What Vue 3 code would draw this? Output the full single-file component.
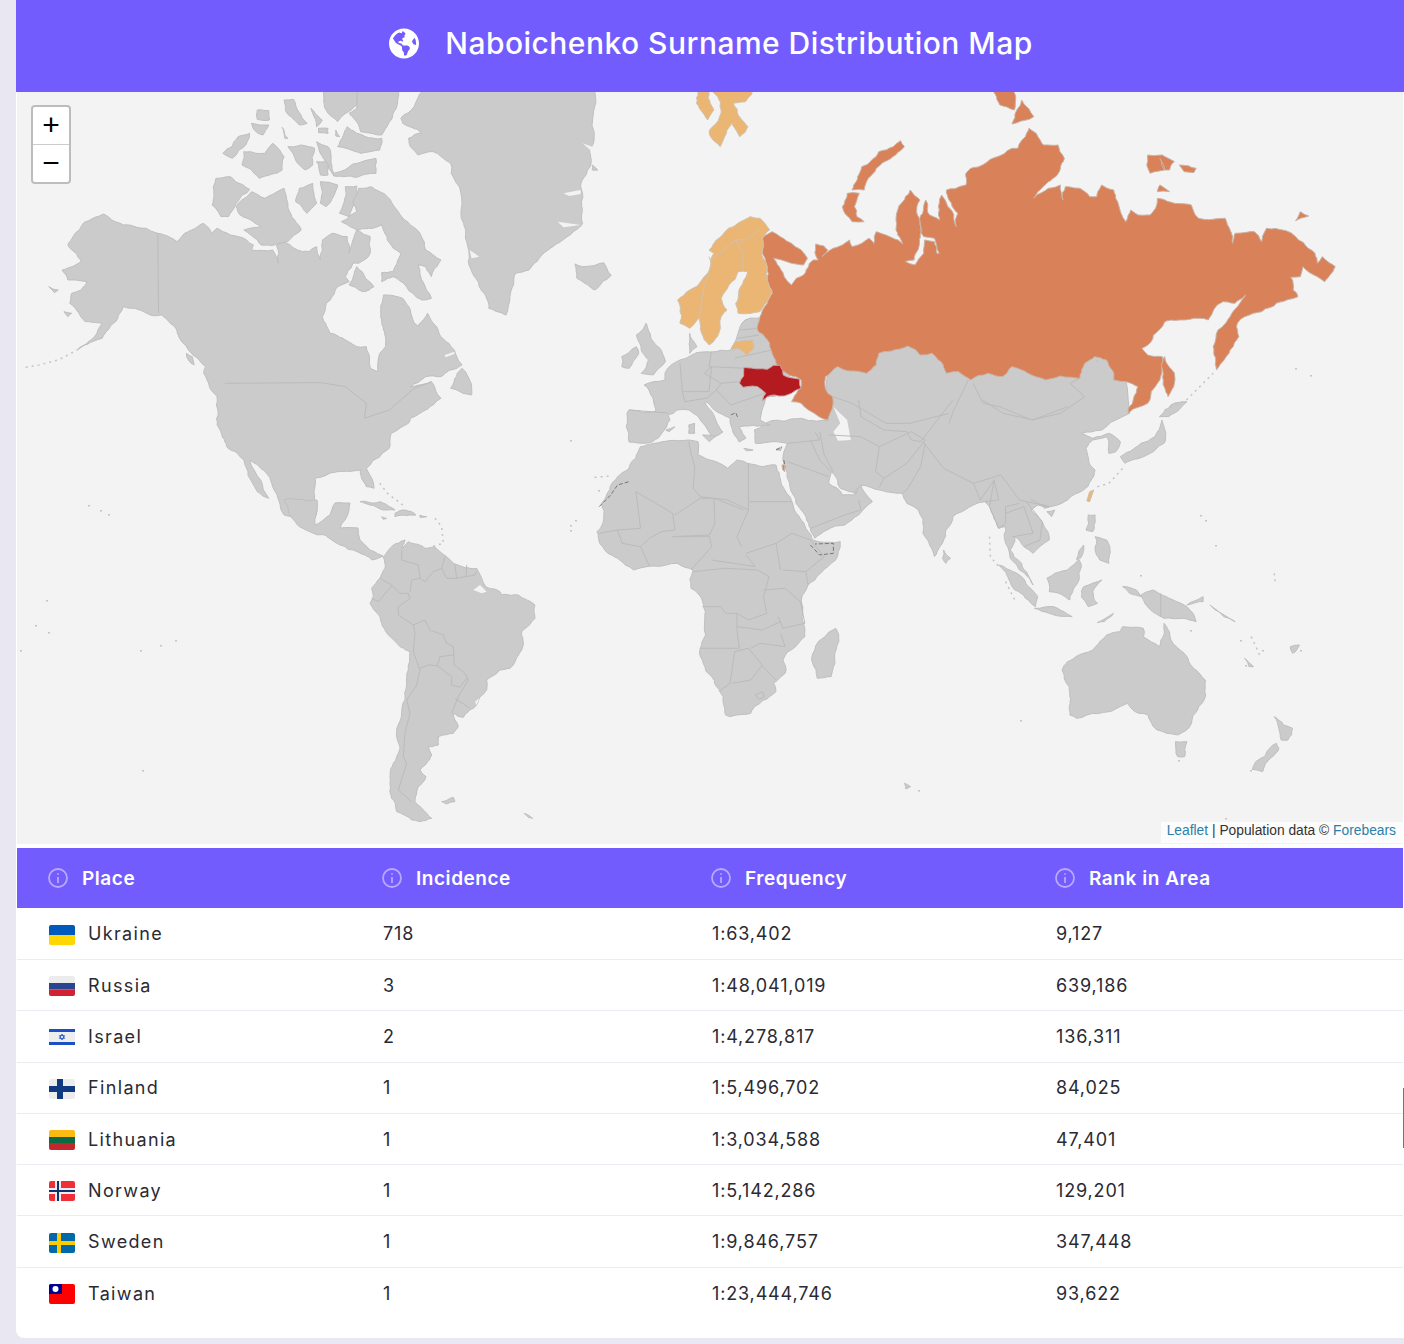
<script setup>
// map shapes are grouped by the box they were measured in
const boxes = {
  north: 'translate(20 90) scale(.3827 .3333)',
  east: 'translate(600 90) scale(.4847 .3333)',
  south: 'translate(590 400) scale(.4592 .3333)',
  america: 'translate(340 500) scale(.3333 .3333)',
  page: ''
}

// coastlines: split long edges and push the midpoints a little so they don't look ruler straight
let seed = 7
function rnd() {
  seed = (seed * 16807) % 2147483647
  return (seed % 2000) / 1000 - 1
}
function rough(points, box) {
  let pts = points.split(' ').map(p => p.split(',').map(Number))
  const unit = box == 'page' ? 0.5 : 1
  for (let pass = 0; pass < 3; pass++) {
    const out = []
    pts.forEach((a, i) => {
      const b = pts[(i + 1) % pts.length]
      out.push(a)
      const len = Math.hypot(b[0] - a[0], b[1] - a[1])
      if (len > 14 * unit) {
        const k = Math.min(len * 0.09, 7 * unit)
        out.push([(a[0] + b[0]) / 2 + rnd() * k, (a[1] + b[1]) / 2 + rnd() * k])
      }
    })
    pts = out
  }
  return pts.map(p => p[0].toFixed(1) + ',' + p[1].toFixed(1)).join(' ')
}

const land = [
  // North America
  { box: 'north', points: '218,372 240,390 270,405 330,415 360,430 410,455 430,430 480,400 500,430 515,415 530,425 570,440 610,465 605,480 660,480 675,520 670,465 690,455 725,480 755,485 775,470 785,510 790,450 815,430 855,440 860,490 880,420 915,440 915,490 885,520 870,520 850,560 860,575 830,590 800,640 790,680 810,730 880,770 905,770 915,835 935,845 940,790 955,770 950,720 945,690 950,615 1000,625 1020,660 1030,700 1040,710 1065,670 1100,740 1135,780 1155,825 1100,860 1060,860 1020,890 1075,875 1100,925 1060,960 1020,985 1015,1000 970,1030 965,1075 925,1110 905,1135 925,1195 905,1190 890,1140 830,1145 770,1165 770,1195 775,1275 690,1275 660,1190 625,1130 600,1110 650,1225 620,1205 585,1110 540,1070 515,1005 515,920 480,850 485,830 440,780 410,720 370,675 340,675 300,655 270,650 250,695 215,745 150,780 195,740 215,700 170,695 130,640 135,610 160,600 175,575 125,570 110,540 160,515 125,465 155,420 165,400' },
  { box: 'page', points: '284,500 317,500 316,515 315,525 330,515 335,503 350,503 345,520 340,528 358,528 360,540 370,550 383,556 372,560 358,552 340,545 325,535 300,527 290,515' },
  // Greenland and the arctic islands
  { box: 'north', points: '1065,-20 1495,-20 1500,150 1490,230 1465,290 1470,400 1430,440 1380,480 1330,540 1295,550 1280,620 1270,675 1225,655 1200,590 1175,530 1170,470 1165,420 1155,340 1125,220 1080,185 1040,195 1020,170 1015,145 1050,130 1000,100 995,85 1030,50' },
  { box: 'north', points: '1450,522 1470,530 1525,518 1545,555 1500,600 1455,565' },
  { box: 'north', points: '785,-10 880,-10 880,45 830,95 800,60' },
  { box: 'north', points: '885,-10 990,-10 975,70 945,135 890,125 860,70 880,55' },
  { box: 'north', points: '855,110 880,130 945,145 940,180 890,190 830,170' },
  { box: 'north', points: '690,30 715,28 750,100 730,105 695,65' },
  { box: 'north', points: '760,55 790,90 775,110' },
  { box: 'north', points: '780,115 805,115 805,130 780,128' },
  { box: 'north', points: '825,120 835,140 825,138' },
  { box: 'north', points: '620,60 650,62 652,90 620,88' },
  { box: 'north', points: '605,100 625,105 650,105 635,135 612,120' },
  { box: 'north', points: '685,112 700,145 692,145' },
  { box: 'north', points: '530,190 570,140 600,130 590,165 555,205 545,200' },
  { box: 'north', points: '585,185 640,190 660,160 690,200 685,240 625,265 605,240 580,225' },
  { box: 'north', points: '700,170 735,165 770,175 765,225 745,240 720,210' },
  { box: 'north', points: '775,155 805,170 820,250 930,205 930,250 880,262 820,258' },
  { box: 'north', points: '775,215 800,215 805,255 785,255' },
  { box: 'north', points: '512,265 550,260 600,298 565,340 545,380 525,380 502,345' },
  { box: 'north', points: '565,350 605,305 640,325 665,310 690,295 700,340 735,420 700,455 630,465 585,420 630,410 575,375' },
  { box: 'north', points: '730,295 765,280 775,340 750,370 720,335' },
  { box: 'north', points: '785,275 830,285 800,350 785,340' },
  { box: 'north', points: '850,290 880,288 860,380 835,370' },
  { box: 'north', points: '885,295 915,290 960,320 975,345 1005,390 1045,430 1060,480 1100,510 1075,560 1060,530 1040,525 1075,625 1050,630 1010,590 975,560 945,575 945,548 975,545 995,490 960,450 945,405 910,415 880,420 840,395 880,365 870,340' },
  { box: 'north', points: '880,530 925,590 895,605 860,585' },
  { box: 'north', points: '115,665 135,670 125,680' },
  { box: 'north', points: '75,590 100,600 90,608' },
  { box: 'north', points: '435,790 450,800 455,825 440,810' },
  { box: 'north', points: '1125,895 1155,835 1180,885 1180,915 1150,905' },
  { box: 'north', points: '1495,225 1510,240 1495,240' },
  // Caribbean
  { box: 'america', points: '60,5 120,5 165,30 130,30 90,15' },
  { box: 'america', points: '165,40 195,30 228,45 165,50' },
  { box: 'america', points: '125,50 140,55 130,58' },
  { box: 'america', points: '240,45 260,50 240,52' },
  // South America
  { box: 'america', points: '130,170 160,135 195,120 185,145 205,125 255,145 285,140 305,160 340,190 410,205 425,235 440,262 480,275 485,285 535,285 585,315 585,355 545,395 545,450 510,505 480,510 440,540 440,570 400,625 370,652 340,640 345,660 355,680 340,700 295,710 295,735 265,740 275,765 240,810 258,830 235,860 225,905 245,925 275,955 240,965 215,960 170,935 155,895 150,850 160,790 180,745 170,690 195,600 205,510 210,455 180,440 145,405 120,350 90,310 100,290 95,265 120,235 135,205' },
  { box: 'america', points: '305,905 340,892 345,905 320,912' },
  { box: 'america', points: '552,940 578,955 565,952' },
  // Africa and Madagascar
  { box: 'south', points: '140,130 215,120 235,125 235,165 300,205 320,180 375,200 405,195 415,240 445,330 470,385 485,420 545,425 545,440 525,490 475,555 460,600 465,670 468,710 420,780 425,820 400,850 405,875 350,940 305,950 295,945 290,890 265,830 240,745 250,660 245,605 220,565 225,510 190,490 95,510 60,475 20,425 15,395 30,350 25,310 60,230 100,175 110,140' },
  { box: 'south', points: '535,685 542,725 525,830 495,835 485,790 495,730' },
  // Asia, Russia is painted over its top part
  { box: 'south', points: '520,-250 1170,-250 1175,40 1145,60 1115,90 1070,100 1095,115 1130,100 1155,125 1145,155 1130,160 1125,110 1095,120 1080,145 1100,210 1075,270 1040,300 990,325 960,300 1000,320 975,315 960,330 985,365 1000,420 965,460 945,440 925,410 915,450 940,490 965,555 935,510 915,475 905,430 905,380 890,385 870,320 860,305 835,315 790,350 775,390 770,420 750,470 725,400 715,330 690,310 680,280 630,270 590,255 580,280 545,265 525,215 520,250 550,285 575,285 590,255 615,305 585,345 555,375 490,415 480,385 460,330 430,235 425,205 420,180 430,130 360,130 358,90 395,62 460,55 518,62' },
  { box: 'south', points: '770,450 785,475 775,490 768,475' },
  // Europe and its islands
  { box: 'page', points: '745,320 759,318 758,330 770,343 774,357 778,365 790,375 790,392 766,397 762,410 760,420 770,425 748,426 739,427 746,438 739,442 732,428 730,418 707,402 705,403 721,430 723,432 712,437 709,432 693,413 689,410 677,410 668,415 670,420 652,442 638,443 629,442 627,413 629,410 654,412 656,410 653,398 644,385 665,380 665,373 680,360 692,355 711,352 731,350 736,340 740,327' },
  { box: 'east', points: '95,700 105,745 135,815 110,855 85,850 100,810 85,780 75,735' },
  { box: 'east', points: '45,800 75,770 80,790 60,835 45,830' },
  { box: 'east', points: '185,730 200,770 185,790 185,755' },
  { box: 'south', points: '215,75 228,70 228,100 215,100' },
  { box: 'south', points: '245,105 275,108 260,125' },
  { box: 'south', points: '335,145 355,150 340,152' },
  { box: 'south', points: '405,148 418,140 415,152' },
  { box: 'south', points: '165,90 185,80 172,95' },
  // Japan, south east Asia, Oceania
  { box: 'south', points: '1245,60 1250,130 1220,160 1165,190 1155,170 1200,130 1230,110' },
  { box: 'south', points: '1240,50 1265,15 1300,5 1260,50' },
  { box: 'south', points: '995,335 1012,330 1005,350' },
  { box: 'south', points: '1085,345 1100,345 1095,395 1080,390' },
  { box: 'south', points: '1100,410 1125,420 1130,490 1110,480 1100,450' },
  { box: 'south', points: '1060,480 1075,435 1068,475' },
  { box: 'south', points: '1065,480 1070,500 1065,540 1045,600 1000,575 995,535 1040,510' },
  { box: 'south', points: '890,495 930,520 975,590 970,620 925,570' },
  { box: 'south', points: '968,625 1010,620 1050,650 1000,640' },
  { box: 'south', points: '1075,560 1115,540 1095,575 1105,610 1085,620 1070,590' },
  { box: 'south', points: '1200,585 1225,570 1270,600 1300,620 1320,665 1290,655 1250,655 1225,635' },
  { box: 'south', points: '1105,668 1140,640 1120,665' },
  { box: 'south', points: '1160,560 1190,570 1200,590 1175,580' },
  { box: 'south', points: '1300,615 1335,590 1335,605' },
  { box: 'south', points: '1350,615 1405,665 1380,650' },
  { box: 'south', points: '1425,775 1445,800 1435,800' },
  { box: 'south', points: '1525,740 1545,735 1530,760' },
  { box: 'south', points: '1160,680 1205,685 1205,710 1240,740 1250,670 1265,720 1300,770 1340,840 1340,890 1310,970 1280,1005 1235,990 1215,945 1195,940 1170,910 1110,940 1060,955 1045,945 1045,880 1028,810 1040,785 1095,750 1125,705 1155,695' },
  { box: 'south', points: '1275,1025 1300,1025 1295,1070 1280,1070' },
  { box: 'south', points: '1490,950 1510,975 1530,985 1520,1020 1505,1020 1500,985' },
  { box: 'south', points: '1495,1030 1500,1045 1465,1115 1442,1108 1450,1085 1480,1045' },
  { box: 'south', points: '685,1150 698,1160 688,1167' }
].map(s => ({ box: s.box, points: rough(s.points, s.box) }))

// lakes, gulfs and fjords cut out of the land
const water = [
  { box: 'south', points: '530,20 560,60 568,120 540,122 530,95 545,70' },
  { box: 'america', points: '400,270 420,255 440,275 425,280' },
  { box: 'america', points: '405,605 418,595 410,615' },
  { box: 'north', points: '1110,795 1135,785 1135,792 1112,802' },
  { box: 'north', points: '1420,310 1465,300 1465,312 1435,318' },
  { box: 'north', points: '1405,395 1465,405 1420,412' },
  { box: 'north', points: '1470,160 1495,170 1498,230 1490,180' },
  { box: 'north', points: '1175,480 1200,500 1180,505' }
]

const borders = [
  { box: 'north', points: '360,430 362,670' },
  { box: 'north', points: '535,880 785,878 850,890 905,940 900,985 965,960 1030,895 1075,875' },
  { box: 'america', points: '185,150 185,180 235,195 240,235 255,245 280,215 305,205 315,170' },
  { box: 'america', points: '305,205 320,235 350,235 345,195' },
  { box: 'america', points: '380,195 378,230' },
  { box: 'america', points: '410,215 405,225 378,230 350,235' },
  { box: 'america', points: '240,235 215,240 210,275' },
  { box: 'america', points: '120,235 155,255 180,280 205,280 210,295' },
  { box: 'america', points: '155,258 115,305 95,295' },
  { box: 'america', points: '210,295 175,320 175,345 220,375 255,360 270,390 310,405 320,430 340,440 343,495 375,520 385,540 355,590 335,640' },
  { box: 'america', points: '220,375 225,400 220,455 240,510' },
  { box: 'america', points: '340,465 300,470 292,497 335,530 335,555 360,562 380,535' },
  { box: 'america', points: '240,505 265,495 292,497' },
  { box: 'america', points: '240,510 230,555 200,600 210,640 195,700 190,770 200,790 175,870 215,905' },
  { box: 'america', points: '345,595 390,625' },
  { box: 'south', points: '215,125 220,160 228,200 225,265 240,290 300,300' },
  { box: 'south', points: '345,190 345,305 440,305' },
  { box: 'south', points: '300,300 345,330 345,305' },
  { box: 'south', points: '345,330 320,410 330,440' },
  { box: 'south', points: '100,275 180,340 185,390 155,395 130,415 110,440' },
  { box: 'south', points: '60,390 110,385 100,275' },
  { box: 'south', points: '185,345 240,295 270,295 272,370 260,405 180,410' },
  { box: 'south', points: '180,410 260,410 265,440 220,510' },
  { box: 'south', points: '272,295 335,330' },
  { box: 'south', points: '265,480 360,500 340,465' },
  { box: 'south', points: '340,460 405,430 415,510' },
  { box: 'south', points: '405,430 440,400 480,420 510,470 470,515 420,510' },
  { box: 'south', points: '225,515 295,505 365,510 390,530 378,590 385,640 345,660 320,640 295,640 285,620 245,620' },
  { box: 'south', points: '378,570 425,565 458,605 468,670 420,685 410,650' },
  { box: 'south', points: '470,515 475,555' },
  { box: 'south', points: '320,680 375,690 415,665' },
  { box: 'south', points: '320,640 320,690 325,745 240,745' },
  { box: 'south', points: '315,755 305,850 280,875' },
  { box: 'south', points: '315,755 345,745 375,795 350,840 310,850' },
  { box: 'south', points: '415,700 425,740 370,730 350,745' },
  { box: 'south', points: '375,798 405,840' },
  { box: 'south', points: '360,885 375,875 380,890 368,898 360,885' },
  { box: 'south', points: '20,400 60,390 70,430 110,440 130,500' },
  { box: 'south', points: '500,95 510,165 530,215' },
  { box: 'south', points: '520,105 590,110 630,140 622,215 640,235 630,262' },
  { box: 'south', points: '630,140 700,95 730,120 690,190 640,235' },
  { box: 'south', points: '730,130 720,200 690,270 680,280' },
  { box: 'south', points: '585,0 590,50 640,90 690,95 700,120 720,125 790,0' },
  { box: 'south', points: '725,125 770,205 835,250 895,225 935,300 1000,320' },
  { box: 'south', points: '835,250 850,300 880,240 890,300 860,305' },
  { box: 'south', points: '880,240 870,320 890,385 905,370 905,320 935,310' },
  { box: 'south', points: '905,340 945,320 965,400 920,410' },
  { box: 'south', points: '950,305 985,365 980,420 945,440' },
  { box: 'south', points: '430,185 520,230' },
  { box: 'south', points: '430,130 500,120 490,95' },
  { box: 'south', points: '480,120 500,180 525,215' },
  { box: 'south', points: '480,385 555,345 590,330 585,300' },
  { box: 'south', points: '855,0 900,40 965,60 1040,20' },
  { box: 'south', points: '1243,580 1243,650' },
  { box: 'east', points: '770,880 790,940 825,950 890,990 950,970 1000,920 970,880 990,865' },
  { box: 'east', points: '760,870 730,960 720,1000' },
  { box: 'east', points: '480,920 520,940 590,1000 640,1000 720,970' },
  { box: 'east', points: '230,785 225,830 300,835' },
  { box: 'east', points: '165,820 170,905 225,905 230,830' },
  { box: 'east', points: '230,830 215,850 250,880 288,875' },
  { box: 'east', points: '250,880 240,900 270,945 340,910' },
  { box: 'east', points: '170,905 175,935 220,925 240,900' },
  { box: 'east', points: '285,745 328,735' },
  { box: 'east', points: '290,720 325,715' },
  { box: 'page', points: '629,410 668,413' },
  { box: 'page', points: '735,358 772,350' }
]

const disputed = [
  { box: 'south', points: '20,320 45,285 60,255 85,245' },
  { box: 'south', points: '480,435 500,465 530,460 530,430 490,432' },
  { box: 'south', points: '405,150 418,142' },
  { box: 'south', points: '422,180 425,200' },
  { box: 'east', points: '270,975 280,968 285,985' }
]

// island chains, drawn as a broken line
const chains = [
  { box: 'north', points: '15,832 50,825 100,810 150,780' },
  { box: 'east', points: '1165,960 1210,930 1265,850' },
  { box: 'south', points: '1105,260 1130,250 1160,205' },
  { box: 'america', points: '285,55 305,80 310,130 275,140' },
  { box: 'north', points: '940,1180 960,1210 1000,1245' },
  { box: 'south', points: '870,410 872,470 890,500' },
  { box: 'south', points: '905,545 925,600' },
  { box: 'south', points: '10,232 45,228' },
  { box: 'south', points: '1440,710 1460,770' },
  { box: 'south', points: '1490,520 1492,545' }
]

const russia = [
  '355,425 372,440 395,460 415,480 428,505 420,525 395,520 375,510 358,505 370,530 380,560 395,585 405,565 420,555 432,520 440,510 450,510 445,462 462,468 470,480 458,500 475,480 500,465 515,450 520,470 540,460 555,445 565,460 570,425 590,435 615,450 625,462 612,400 612,370 630,320 640,300 650,318 660,330 655,375 665,420 658,470 648,510 630,515 650,525 668,490 670,450 690,455 695,490 700,490 690,445 668,440 660,395 672,330 680,375 700,390 700,360 705,315 715,340 730,375 735,410 738,370 720,330 715,300 755,285 755,250 765,235 810,205 850,175 862,175 885,115 900,130 915,165 945,165 958,205 950,235 935,265 895,325 925,295 950,285 955,330 960,290 990,295 1010,320 1025,320 1035,285 1060,300 1070,345 1075,370 1085,395 1095,360 1110,375 1135,375 1150,325 1185,340 1220,345 1235,385 1290,385 1300,420 1305,460 1310,430 1350,425 1365,455 1375,415 1415,422 1475,490 1480,520 1490,500 1517,530 1495,575 1480,560 1450,530 1445,560 1425,562 1430,600 1440,620 1395,640 1365,665 1330,680 1315,700 1318,740 1300,780 1272,840 1265,770 1275,720 1300,680 1320,640 1332,615 1325,625 1310,640 1285,635 1255,690 1225,685 1195,690 1165,695 1125,770 1118,775 1130,795 1160,800 1155,870 1130,940 1090,970 1110,890 1060,870 1045,810 1020,800 1000,820 990,865 950,858 920,870 890,855 850,830 830,860 800,850 765,870 740,845 715,850 685,790 660,795 635,768 575,790 570,825 550,850 490,830 465,860 470,910 480,920 470,990 430,960 415,940 395,935 415,890 415,870 390,855 365,825 358,800 350,760 325,720 330,680 345,640 355,610 345,570 345,530 335,480 335,445',
  '620,152 628,170 610,195 570,235 545,300 520,300 540,230 575,185 605,170',
  '510,310 535,310 525,350 530,380 545,395 520,395 505,370 500,350',
  '805,-10 850,-10 855,60 825,45',
  '870,30 895,80 850,102 860,60',
  '1130,195 1160,195 1185,215 1175,240 1165,240 1155,205 1165,240 1135,250 1128,225',
  '1195,225 1230,235 1225,248 1205,245',
  '1155,285 1175,305 1150,305',
  '1445,365 1462,378 1435,392',
  '1165,800 1185,880 1172,920 1162,870'
].map(p => rough(p, 'east'))

const nordics = [
  '345,410 330,385 310,380 290,395 265,415 240,450 225,480 235,490 215,560 185,600 160,630 165,700 185,715 205,680 225,765 245,730 250,680 262,660 250,625 285,545 305,545 290,590 280,640 285,670 330,665 355,610 345,570 345,530 335,480 335,445 350,420',
  '280,755 315,750 318,770 305,795 285,775 270,778',
  '200,-10 222,-10 235,60 222,90 205,55',
  '225,-10 318,-10 300,35 275,40 285,75 305,110 288,140 272,100 262,120 248,170 225,125 240,100 250,60'
].map(p => rough(p, 'east'))

const nordicLines = ['225,500 230,520 215,590 205,680', '280,450 230,510', '280,450 295,490 295,540', '330,420 300,450 280,450']

const ukraine = rough('297,832 345,838 358,826 372,826 378,855 412,868 415,895 395,910 380,918 360,915 345,920 335,932 342,910 325,890 295,892 288,880', 'east')
const israel = '418,195 424,195 424,215 420,210'
const taiwan = '1088,275 1097,270 1088,305 1082,303'

// specks of small islands, x y in page pixels
const specks = [
  [88, 505], [100, 510], [108, 514], [570, 525], [575, 520], [598, 490], [605, 497], [20, 650], [46, 600], [142, 770], [175, 640], [570, 440], [570, 530], [1205, 520], [1215, 545], [1295, 368], [1310, 375], [1240, 640], [1262, 650], [1300, 650], [1245, 665], [1020, 720], [1190, 630], [905, 787], [918, 790], [1225, 818], [1096, 360], [1140, 575], [1200, 515], [430, 630], [35, 625], [48, 632], [140, 650], [160, 645], [1178, 760], [1250, 770]
]

const columns = ['Place', 'Incidence', 'Frequency', 'Rank in Area']

const rows = [
  { place: 'Ukraine', incidence: '718', frequency: '1:63,402', rank: '9,127', flag: [['#0059bd', 0, 0, 26, 10], ['#ffd600', 0, 10, 26, 10]] },
  { place: 'Russia', incidence: '3', frequency: '1:48,041,019', rank: '639,186', flag: [['#ececec', 0, 0, 26, 7], ['#29458f', 0, 7, 26, 6.5], ['#d1202f', 0, 13.5, 26, 6.5]] },
  { place: 'Israel', incidence: '2', frequency: '1:4,278,817', rank: '136,311', flag: [['#eeeeee', 0, 2, 26, 16], ['#1d4fc4', 0, 2, 26, 3], ['#1d4fc4', 0, 15, 26, 3]] },
  { place: 'Finland', incidence: '1', frequency: '1:5,496,702', rank: '84,025', flag: [['#ececec', 0, 0, 26, 20], ['#0f3a82', 8, 0, 6, 20], ['#0f3a82', 0, 7, 26, 6]] },
  { place: 'Lithuania', incidence: '1', frequency: '1:3,034,588', rank: '47,401', flag: [['#fdba12', 0, 0, 26, 7], ['#0a6a44', 0, 7, 26, 6], ['#c1272d', 0, 13, 26, 7]] },
  { place: 'Norway', incidence: '1', frequency: '1:5,142,286', rank: '129,201', flag: [['#ef2f37', 0, 0, 26, 20], ['#eeeeee', 6, 0, 6, 20], ['#eeeeee', 0, 7, 26, 6], ['#12306e', 8, 0, 2, 20], ['#12306e', 0, 9, 26, 2]] },
  { place: 'Sweden', incidence: '1', frequency: '1:9,846,757', rank: '347,448', flag: [['#0069a8', 0, 0, 26, 20], ['#fecb00', 8, 0, 4, 20], ['#fecb00', 0, 8, 26, 4]] },
  { place: 'Taiwan', incidence: '1', frequency: '1:23,444,746', rank: '93,622', flag: [['#fe0000', 0, 0, 26, 20], ['#000095', 0, 0, 13, 10]] }
]
</script>

<template>
  <div class="page">
    <div class="card">
      <h1 class="title">
        <svg class="globe" viewBox="0 0 496 512"><path fill="#fff" d="M248 8C111.03 8 0 119.03 0 256s111.03 248 248 248 248-111.03 248-248S384.97 8 248 8zm82.29 357.6c-3.9 3.88-7.99 7.95-11.31 11.28-2.99 3-5.1 6.7-6.17 10.71-1.51 5.66-2.73 11.38-4.77 16.87l-17.39 46.85c-13.76 3-28 4.69-42.65 4.69v-27.38c1.69-12.62-7.64-36.26-22.63-51.25-6-6-9.37-14.14-9.37-22.63v-32.01c0-11.64-6.27-22.34-16.46-27.97-14.37-7.95-34.81-19.06-48.81-26.11-11.48-5.78-22.1-13.14-31.65-21.75l-.8-.72a114.792 114.792 0 0 1-18.06-20.74c-9.38-13.77-24.66-36.42-34.59-51.14 20.47-45.5 57.36-82.04 103.2-101.89l24.01 12.01C203.48 89.74 216 82.01 216 70.11v-11.3c7.99-1.29 16.12-2.11 24.42-2.42l28.3 28.3c6.25 6.25 6.25 16.38 0 22.63L264 112l-10.34 10.34c-3.12 3.12-3.12 8.19 0 11.31l4.69 4.69c3.12 3.12 3.12 8.19 0 11.31l-8 8a8.008 8.008 0 0 1-5.66 2.34h-8.99c-2.08 0-4.08.81-5.58 2.27l-9.92 9.65a8.008 8.008 0 0 0-1.58 9.31l15.59 31.19c2.66 5.32-1.21 11.58-7.15 11.58h-5.64c-1.93 0-3.79-.7-5.24-1.96l-9.28-8.06a16.017 16.017 0 0 0-15.55-3.1l-31.17 10.39a11.95 11.95 0 0 0-8.17 11.34c0 4.53 2.56 8.66 6.61 10.69l11.08 5.54c9.41 4.71 19.79 7.16 30.31 7.16s22.59 27.29 32 32h66.75c8.49 0 16.62 3.37 22.63 9.37l13.69 13.69a30.503 30.503 0 0 1 8.93 21.57 46.536 46.536 0 0 1-13.72 32.98zM417 274.25c-5.79-1.45-10.84-5-14.15-9.97l-17.98-26.97a23.97 23.97 0 0 1 0-26.62l19.59-29.38c2.32-3.47 5.5-6.29 9.24-8.15l12.98-6.49C440.2 193.59 448 223.87 448 256c0 8.67-.74 17.16-1.82 25.54L417 274.25z"/></svg>
        <span>Naboichenko Surname Distribution Map</span>
      </h1>

      <div class="map">
        <svg class="world" viewBox="17 92 1386 752">
          <polygon v-for="(s, i) in land" :key="i" class="land" :transform="boxes[s.box]" :points="s.points" />
          <polygon v-for="(s, i) in water" :key="i" class="water" :transform="boxes[s.box]" :points="s.points" />
          <polyline v-for="(s, i) in borders" :key="i" class="border" :transform="boxes[s.box]" :points="s.points" />
          <polyline v-for="(s, i) in disputed" :key="i" class="disputed" :transform="boxes[s.box]" :points="s.points" />
          <polyline v-for="(s, i) in chains" :key="i" class="chain" :transform="boxes[s.box]" :points="s.points" />
          <rect v-for="(p, i) in specks" :key="i" class="speck" :x="p[0]" :y="p[1]" width="2" height="1.5" />
          <g :transform="boxes.east">
            <polygon v-for="(p, i) in russia" :key="i" class="russia" :points="p" />
            <polygon v-for="(p, i) in nordics" :key="i" class="nordic" :points="p" />
            <polyline v-for="(p, i) in nordicLines" :key="i" class="nordic-line" :points="p" />
            <polygon class="ukraine" :points="ukraine" />
          </g>
          <g :transform="boxes.south">
            <polygon class="russia" :points="israel" />
            <polygon class="nordic" :points="taiwan" />
          </g>
        </svg>

        <div class="zoom">
          <a class="zoom-btn">+</a>
          <a class="zoom-btn">−</a>
        </div>

        <div class="attribution">
          <a>Leaflet</a> | Population data © <a>Forebears</a>
        </div>
      </div>

      <div class="table">
        <div class="row head">
          <div v-for="c in columns" :key="c" class="cell">
            <svg class="info" viewBox="0 0 20 20">
              <circle cx="10" cy="10" r="9" />
              <path d="M10 9v6M10 5.2v1.6" />
            </svg>
            {{ c }}
          </div>
        </div>
        <div v-for="r in rows" :key="r.place" class="row">
          <div class="cell place">
            <svg class="flag" viewBox="0 0 26 20">
              <rect v-for="(b, i) in r.flag" :key="i" :fill="b[0]" :x="b[1]" :y="b[2]" :width="b[3]" :height="b[4]" />
              <path v-if="r.place == 'Israel'" d="M13 7l2.6 4.4h-5.2zM13 13l-2.6-4.4h5.2z" fill="none" stroke="#1d4fc4" stroke-width=".8" />
              <circle v-if="r.place == 'Taiwan'" cx="6.5" cy="5" r="3" fill="#fff" />
            </svg>
            {{ r.place }}
          </div>
          <div class="cell">{{ r.incidence }}</div>
          <div class="cell">{{ r.frequency }}</div>
          <div class="cell">{{ r.rank }}</div>
        </div>
      </div>
    </div>
    <div class="edge-tab"></div>
  </div>
</template>

<style>
body {
  background: #e8e7f2;
}
</style>

<style scoped>
.page {
  position: relative;
  height: 1344px;
  padding-left: 16px;
  box-sizing: border-box;
  font-family: Inter, "Liberation Sans", sans-serif;
  color: #2a2a33;
  overflow: hidden;
}

.card {
  height: 1338px;
  background: #fff;
  border-radius: 0 0 0 8px;
  overflow: hidden;
}

.title {
  height: 92px;
  margin: 0;
  padding: 0 0 6px 2px;
  box-sizing: border-box;
  background: #725cfe;
  color: #fff;
  font-size: 30px;
  font-weight: 500;
  letter-spacing: .47px;
  display: flex;
  align-items: center;
  justify-content: center;
  gap: 26px;
}

.globe {
  width: 30px;
  height: 31px;
}

.map {
  position: relative;
  height: 752px;
  margin: 0 1px;
  background: #f3f3f3;
}

.world {
  display: block;
  width: 1386px;
  height: 752px;
}

.land,
.border,
.disputed,
.chain,
.russia,
.nordic,
.nordic-line,
.ukraine {
  vector-effect: non-scaling-stroke;
  stroke-linejoin: round;
}

.land {
  fill: #cbcbcb;
  stroke: #bfbfbf;
  stroke-width: 1;
}

.water {
  fill: #f3f3f3;
}

.border {
  fill: none;
  stroke: #bbbbbb;
  stroke-width: 1;
}

.disputed {
  fill: none;
  stroke: #777;
  stroke-width: 1;
  stroke-dasharray: 4 2;
}

.chain {
  fill: none;
  stroke: #c4c4c4;
  stroke-width: 1.5;
  stroke-dasharray: 2 4;
}

.speck {
  fill: #c4c4c4;
}

.russia {
  fill: #d98259;
  stroke: #c9b3a6;
  stroke-width: 1;
}

.nordic {
  fill: #ebb674;
  stroke: #cfc2ae;
  stroke-width: 1;
}

.nordic-line {
  fill: none;
  stroke: #cfc2ae;
  stroke-width: 1;
}

.ukraine {
  fill: #b31b20;
  stroke: #c9a5a5;
  stroke-width: 1;
}

.zoom {
  position: absolute;
  top: 13px;
  left: 14px;
  width: 36px;
  border: 2px solid #bdbdbd;
  border-radius: 4px;
  background: #fff;
}

.zoom-btn {
  display: block;
  height: 37px;
  text-align: center;
  font: 30px/36px "Liberation Sans", sans-serif;
  color: #000;
}

.zoom-btn + .zoom-btn {
  border-top: 1px solid #ccc;
}

.attribution {
  position: absolute;
  right: 0;
  bottom: 1px;
  height: 21px;
  padding: 0 7px 0 6px;
  background: rgba(255, 255, 255, .7);
  font: 13.8px/18px "Liberation Sans", sans-serif;
  color: #333;
}

.attribution a {
  color: #2b7fa8;
}

.table {
  margin: 4px 1px 0;
}

.row {
  display: grid;
  grid-template-columns: 334px 329px 344px 1fr;
  height: 51.3px;
  padding-left: 32px;
  align-items: center;
  box-sizing: border-box;
  border-bottom: 1px solid #ebebf2;
  font-size: 18px;
  letter-spacing: .85px;
}

.row:last-child {
  border-bottom: 0;
}

.row.head {
  height: 60px;
  margin-bottom: .7px;
  border: 0;
  background: #725cfe;
  color: #fff;
  font-size: 19px;
  font-weight: 600;
  letter-spacing: .55px;
}

.cell {
  display: flex;
  align-items: center;
}

.place {
  letter-spacing: 1.35px;
}

.info {
  width: 20px;
  height: 20px;
  margin: 0 14px 0 -1px;
  fill: none;
  stroke: rgba(255, 255, 255, .48);
  stroke-width: 1.8;
}

.flag {
  width: 26px;
  height: 20px;
  margin: 2px 13px 0 0;
  border-radius: 2px;
}

.edge-tab {
  position: absolute;
  top: 1088px;
  right: 0;
  width: 1px;
  height: 60px;
  background: #7a5fe0;
}
</style>
